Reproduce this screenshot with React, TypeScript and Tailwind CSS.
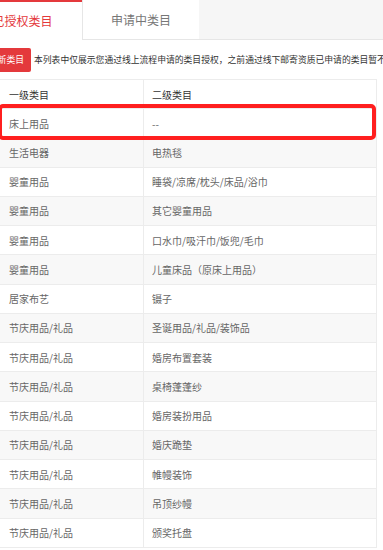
const rows: [string, string][] = [
  ["床上用品", "--"],
  ["生活电器", "电热毯"],
  ["婴童用品", "睡袋/凉席/枕头/床品/浴巾"],
  ["婴童用品", "其它婴童用品"],
  ["婴童用品", "口水巾/吸汗巾/饭兜/毛巾"],
  ["婴童用品", "儿童床品（原床上用品）"],
  ["居家布艺", "镊子"],
  ["节庆用品/礼品", "圣诞用品/礼品/装饰品"],
  ["节庆用品/礼品", "婚房布置套装"],
  ["节庆用品/礼品", "桌椅蓬蓬纱"],
  ["节庆用品/礼品", "婚房装扮用品"],
  ["节庆用品/礼品", "婚庆跪垫"],
  ["节庆用品/礼品", "帷幔装饰"],
  ["节庆用品/礼品", "吊顶纱幔"],
  ["节庆用品/礼品", "颁奖托盘"],
];

export default function App() {
  return (
    <div
      className="relative w-[383px] h-[550px] overflow-hidden bg-white"
      style={{ fontFamily: '"Noto Sans CJK SC", "Noto Sans", sans-serif' }}
    >
      {/* tabs */}
      <div className="flex h-[40px] -ml-[37px]">
        <div className="w-[119px] border-t-2 border-[#e4393c] bg-white flex items-center justify-center text-[12px] text-[#e4393c]">
          已授权类目
        </div>
        <div className="w-[117px] border-l border-b border-[#e6e6e6] bg-white flex items-center justify-center text-[12px] text-[#777]">
          申请中类目
        </div>
        <div className="flex-1 border-b border-[#e6e6e6] bg-[#f6f6f6]" />
      </div>

      {/* action row */}
      <div className="flex items-center h-[39px] -ml-[27px] whitespace-nowrap">
        <div className="h-[24px] flex items-center pl-[7px] pr-[7px] bg-[#e4393c] rounded-r-[2px] text-white text-[8.8px]">
          添加新类目
        </div>
        <div className="ml-[3px] text-[8.8px] text-[#333]">
          本列表中仅展示您通过线上流程申请的类目授权，之前通过线下邮寄资质已申请的类目暂不在此展示
        </div>
      </div>

      {/* table */}
      <div className="w-[377px] border-t border-r border-[#ececec] text-[10px]">
        <div className="flex h-[29px] border-b border-[#ececec] text-[#333] bg-white">
          <div className="w-[144px] border-r border-[#ececec] pl-[9px] flex items-center">一级类目</div>
          <div className="flex-1 pl-[8px] flex items-center">二级类目</div>
        </div>
        {rows.map(([a, b], i) => (
          <div
            key={i}
            className={`flex h-[29.25px] border-b border-[#ececec] text-[#666] ${i % 2 === 1 ? "bg-[#f8f8f8]" : "bg-white"}`}
          >
            <div className="w-[144px] border-r border-[#ececec] pl-[9px] flex items-center">{a}</div>
            <div className="flex-1 pl-[8px] flex items-center">{b}</div>
          </div>
        ))}
      </div>

      {/* annotation box */}
      <div className="absolute left-[-2px] top-[104px] w-[378px] h-[36px] border-[4.5px] border-[#ff1f1f] rounded-[5px]" />
    </div>
  );
}
